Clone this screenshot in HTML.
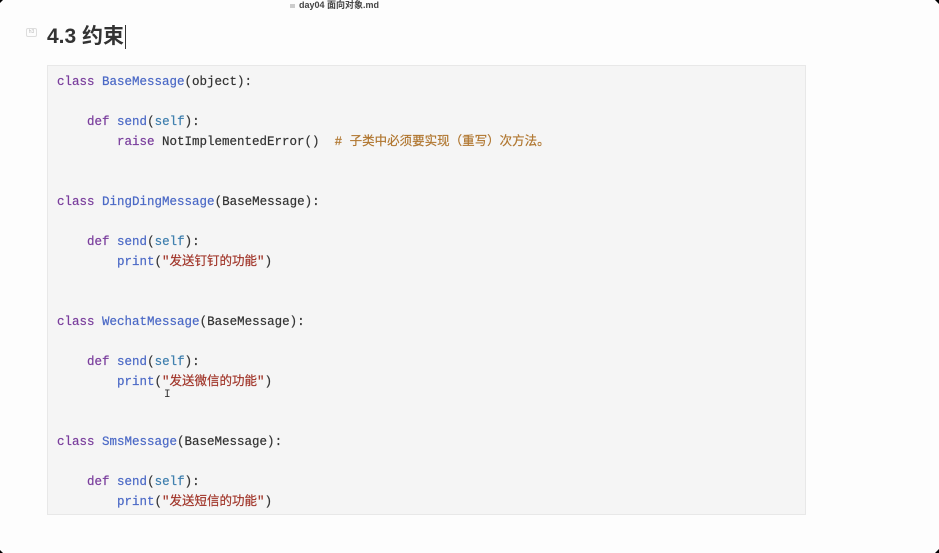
<!DOCTYPE html>
<html><head><meta charset="utf-8"><style>
body{margin:0;width:939px;height:553px;background:#fdfdfd;position:relative;overflow:hidden;font-family:"Liberation Sans","Noto Sans CJK SC",sans-serif}
.top{position:absolute;left:290px;top:0;font-size:9px;font-weight:bold;color:#444;line-height:11px}
.top i{display:inline-block;width:5px;height:4px;background:#ccc;margin-right:4px;vertical-align:middle}
.h3tag{position:absolute;left:26px;top:28px;width:9px;height:7px;border:1px solid #ddd;border-radius:2px;font-size:5px;color:#bbb;text-align:center;line-height:7px}
h1{position:absolute;left:47px;top:22px;margin:0;font-size:21px;font-weight:bold;color:#333;line-height:30px}
.caret{display:inline-block;width:1px;height:24px;background:#333;vertical-align:middle;margin-left:1px}
.code{position:absolute;left:47px;top:65px;width:759px;height:450px;background:#f5f5f5;border:1px solid #e8e8e8;box-sizing:border-box}
pre{margin:0;position:absolute;left:9px;top:6px;font-family:"Liberation Mono","Noto Sans CJK SC",monospace;font-size:12.5px;line-height:20px;color:#333;-webkit-text-stroke:0.2px}
.k{color:#7a3e9d}.n{color:#4b69c6}.s{color:#3f7fae}.st{color:#a1362a}.c{color:#b0762f}
.cor{position:absolute;width:0;height:0}
</style></head><body>
<div class="top"><i></i>day04 面向对象.md</div>
<div class="h3tag">h3</div>
<h1>4.3 约束<span class="caret"></span></h1>
<div class="code"><pre><span class="k">class</span> <span class="n">BaseMessage</span>(object):

    <span class="k">def</span> <span class="n">send</span>(<span class="s">self</span>):
        <span class="k">raise</span> NotImplementedError()  <span class="c"># 子类中必须要实现（重写）次方法。</span>


<span class="k">class</span> <span class="n">DingDingMessage</span>(BaseMessage):

    <span class="k">def</span> <span class="n">send</span>(<span class="s">self</span>):
        <span class="n">print</span>(<span class="st">"发送钉钉的功能"</span>)


<span class="k">class</span> <span class="n">WechatMessage</span>(BaseMessage):

    <span class="k">def</span> <span class="n">send</span>(<span class="s">self</span>):
        <span class="n">print</span>(<span class="st">"发送微信的功能"</span>)


<span class="k">class</span> <span class="n">SmsMessage</span>(BaseMessage):

    <span class="k">def</span> <span class="n">send</span>(<span class="s">self</span>):
        <span class="n">print</span>(<span class="st">"发送短信的功能"</span>)</pre></div>
<div style="position:absolute;left:164px;top:389px;font-size:11px;color:#333;font-family:'Liberation Mono',monospace">I</div>
<div class="cor" style="left:0;top:0;border-top:3px solid #000;border-right:3px solid transparent"></div>
<div class="cor" style="right:0;top:0;border-top:4px solid #000;border-left:4px solid transparent"></div>
<div class="cor" style="left:0;bottom:0;border-bottom:3px solid #000;border-right:3px solid transparent"></div>
<div class="cor" style="right:0;bottom:0;border-bottom:4px solid #000;border-left:4px solid transparent"></div>
</body></html>
